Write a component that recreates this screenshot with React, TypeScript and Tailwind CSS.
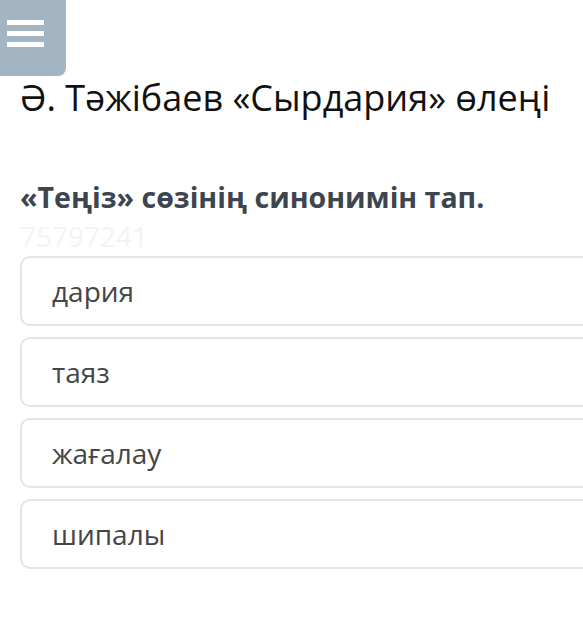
const options = ['дария', 'таяз', 'жағалау', 'шипалы'];

export default function App() {
  return (
    <div className="w-[583px] h-[635px] overflow-hidden bg-white" style={{ fontFamily: '"Open Sans", "Noto Sans", sans-serif' }}>
      {/* Menu button */}
      <div className="w-[66px] h-[76px] bg-[#a3b5c3] rounded-br-[8px] flex flex-col gap-[6px] pl-[7px] pt-[20px]">
        <div className="w-[37px] h-[5px] bg-white" />
        <div className="w-[37px] h-[5px] bg-white" />
        <div className="w-[37px] h-[5px] bg-white" />
      </div>

      <div className="pl-[20px]">
        <h1 className="text-[36px] leading-[44px] text-[#111] mt-[0px]">Ә. Тәжібаев «Сырдария» өлеңі</h1>
        <h2 className="mt-[59px] text-[28.5px] leading-[36px] font-bold text-[#3c4550]">«Теңіз» сөзінің синонимін тап.</h2>
        <div className="text-[28px] leading-[36px] text-[#f3f3f3] mt-[3px]">75797241</div>

        <div className="mt-[2px] flex flex-col gap-[11px]">
          {options.map(o => (
            <div key={o} className="h-[70px] w-[600px] border-2 border-[#e4e4e4] rounded-[10px] flex items-center pl-[30px] text-[28px] text-[#454545]">
              {o}
            </div>
          ))}
        </div>
      </div>
    </div>
  );
}
